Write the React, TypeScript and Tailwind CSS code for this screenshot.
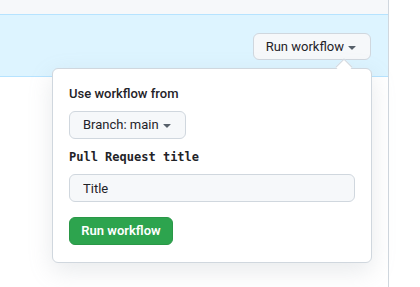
import { useState } from 'react';

function Caret({ className = '' }: { className?: string }) {
  return (
    <svg width="16" height="16" viewBox="0 0 16 16" className={className} fill="currentColor">
      <path d="m4.427 7.427 3.396 3.396a.25.25 0 0 0 .354 0l3.396-3.396A.25.25 0 0 0 11.396 7H4.604a.25.25 0 0 0-.177.427Z" />
    </svg>
  );
}

export default function App() {
  const [title, setTitle] = useState('');

  return (
    <div className="w-[420px] h-[287px] bg-white overflow-hidden font-['Roboto','Liberation_Sans',Arial,sans-serif] text-[#1f2328]">
      <div className="w-[389px] h-full border-r border-[#d0d7de] flex flex-col">
        <div className="h-[15px] bg-[#f6f8fa] border-b border-[#b6e3ff] shrink-0" />
        <div className="relative h-[62px] bg-[#ddf4ff] border-b border-[#b6e3ff] shrink-0 flex justify-end items-start pt-[18px] pr-[17px]">
          <button className="h-[27px] pl-3 pr-[10px] flex items-center whitespace-nowrap rounded-md border border-[#d0d7de] bg-[#f6f8fa] text-[13px]">
            Run workflow
            <Caret className="text-[#57606a] shrink-0" />
          </button>

          <div className="absolute left-[52px] top-[53px] w-[320px] z-10">
            <div className="absolute right-[22px] -top-[7px] w-3 h-3 bg-white border-l border-t border-[#d0d7de] rotate-45" />
            <div className="h-[195px] bg-white border border-[#d0d7de] rounded-md shadow-[0_8px_24px_rgba(140,149,159,0.2)] px-4 pt-[17px] flex flex-col">
              <div className="text-[13px] font-medium leading-4 shrink-0">Use workflow from</div>
              <button className="mt-[9px] h-[28px] self-start shrink-0 pl-[13px] pr-[10px] flex items-center whitespace-nowrap rounded-md border border-[#d0d7de] bg-[#f6f8fa] text-[13px]">
                Branch: main
                <Caret className="text-[#57606a] shrink-0" />
              </button>
              <div className="mt-[10px] shrink-0 font-['DejaVu_Sans_Mono','Liberation_Mono',monospace] text-[12px] font-bold leading-4">Pull Request title</div>
              <input
                value={title}
                onChange={(e) => setTitle(e.target.value)}
                placeholder="Title"
                className="mt-[9px] h-[28px] shrink-0 w-[286px] px-[13px] rounded-md border border-[#d0d7de] bg-[#f6f8fa] text-[13px] placeholder:text-[#1f2328] focus:outline-none"
              />
              <button className="mt-[15px] h-[28px] w-[104px] shrink-0 rounded-md bg-[#2da44e] border border-[#2a9747] text-white text-[13px] font-semibold whitespace-nowrap">
                Run workflow
              </button>
            </div>
          </div>
        </div>
        <div className="flex-1" />
      </div>
    </div>
  );
}
